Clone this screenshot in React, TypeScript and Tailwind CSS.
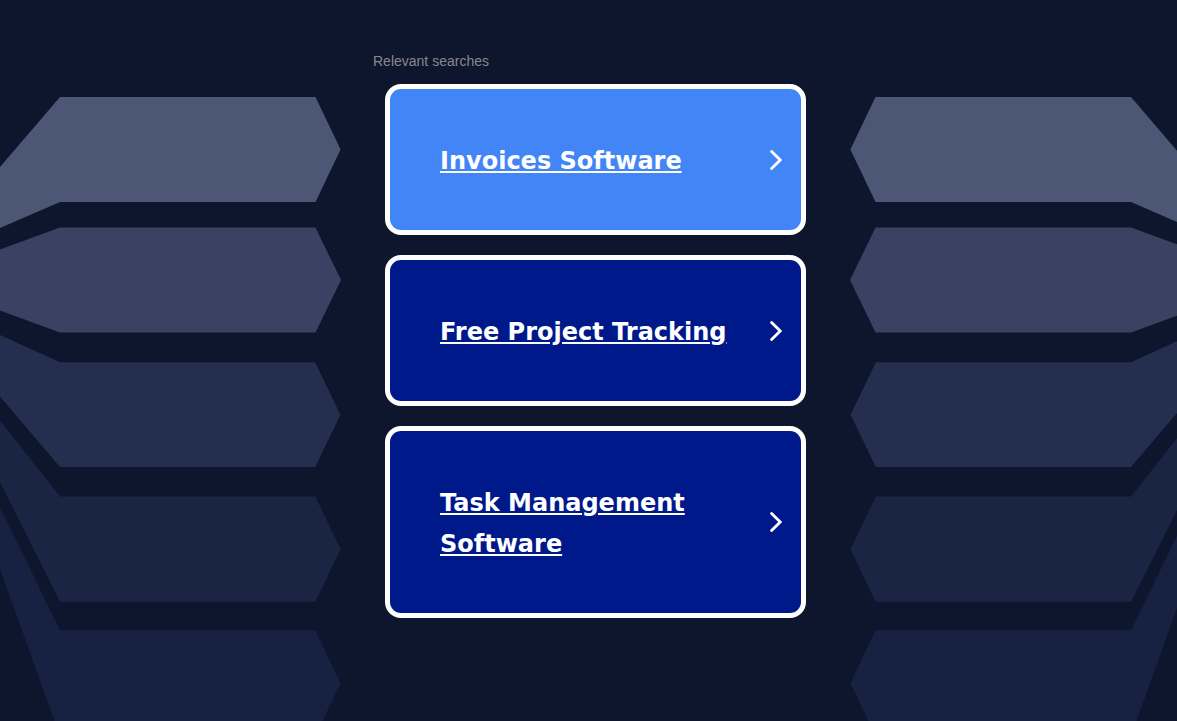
import { useId } from "react";

const searches = [
  { label: "Invoices Software", tone: "bg-[#4285f6]" },
  { label: "Free Project Tracking", tone: "bg-[#00198a]" },
  { label: "Task Management Software", tone: "bg-[#00198a]" },
];

const bands = [
  { fill: "#4c5775", points: "-60,237 60,97 315.5,97 340.6,149.5 315.5,202 60,202 -60,254" },
  { fill: "#394262", points: "-60,271.3 60,227.6 315.5,227.6 341,280 315.5,332.5 60,332.5 -60,288.5" },
  { fill: "#242f4f", points: "-60,307.6 60,362.2 315.2,362.2 340.4,414.7 315.2,467 60,467 -60,326" },
  { fill: "#1a2544", points: "-60,344.5 60,496.5 315.3,496.5 340.6,549.3 315.3,601.7 60,601.7 -60,362.3" },
  { fill: "#172242", points: "-60,383.7 60,630.3 315.3,630.3 340.6,683.3 315.3,736 60,736 -60,402" },
];

function Backdrop() {
  const bandsId = useId();
  return (
    <svg
      aria-hidden="true"
      className="absolute inset-0 h-full w-full"
      viewBox="0 0 1177 721"
      preserveAspectRatio="xMidYMin slice"
    >
      <g id={bandsId}>
        {bands.map((band) => (
          <polygon key={band.fill} fill={band.fill} points={band.points} />
        ))}
      </g>
      <use href={`#${bandsId}`} transform="translate(1191 0) scale(-1 1)" />
    </svg>
  );
}

function Chevron() {
  return (
    <svg
      aria-hidden="true"
      className="h-5 w-3 shrink-0"
      viewBox="0 0 12 20"
      fill="none"
      stroke="#fff"
      strokeWidth="2.8"
      strokeLinecap="round"
    >
      <path d="M1.6 1.5 10.2 10 1.6 18.5" />
    </svg>
  );
}

export default function App() {
  return (
    <div className="relative min-h-screen overflow-hidden bg-[#0d162d]">
      <Backdrop />
      <main className="relative mx-auto max-w-[431px] pt-[51px] pb-8">
        <h1 className="font-['Liberation_Sans',Arial,sans-serif] text-sm text-[#888888]">
          Relevant searches
        </h1>
        <ul className="mt-[13px] -mr-0.5 ml-3 flex flex-col gap-5">
          {searches.map((search) => (
            <li key={search.label}>
              <a
                href="#"
                className={`flex items-center justify-between gap-8 rounded-2xl border-5 border-white py-12 pr-[19px] pl-[50px] font-['Verdana','DejaVu_Sans',sans-serif] text-2xl leading-[41px] font-bold text-white ${search.tone}`}
              >
                <span className="pt-1 underline">{search.label}</span>
                <Chevron />
              </a>
            </li>
          ))}
        </ul>
      </main>
    </div>
  );
}
